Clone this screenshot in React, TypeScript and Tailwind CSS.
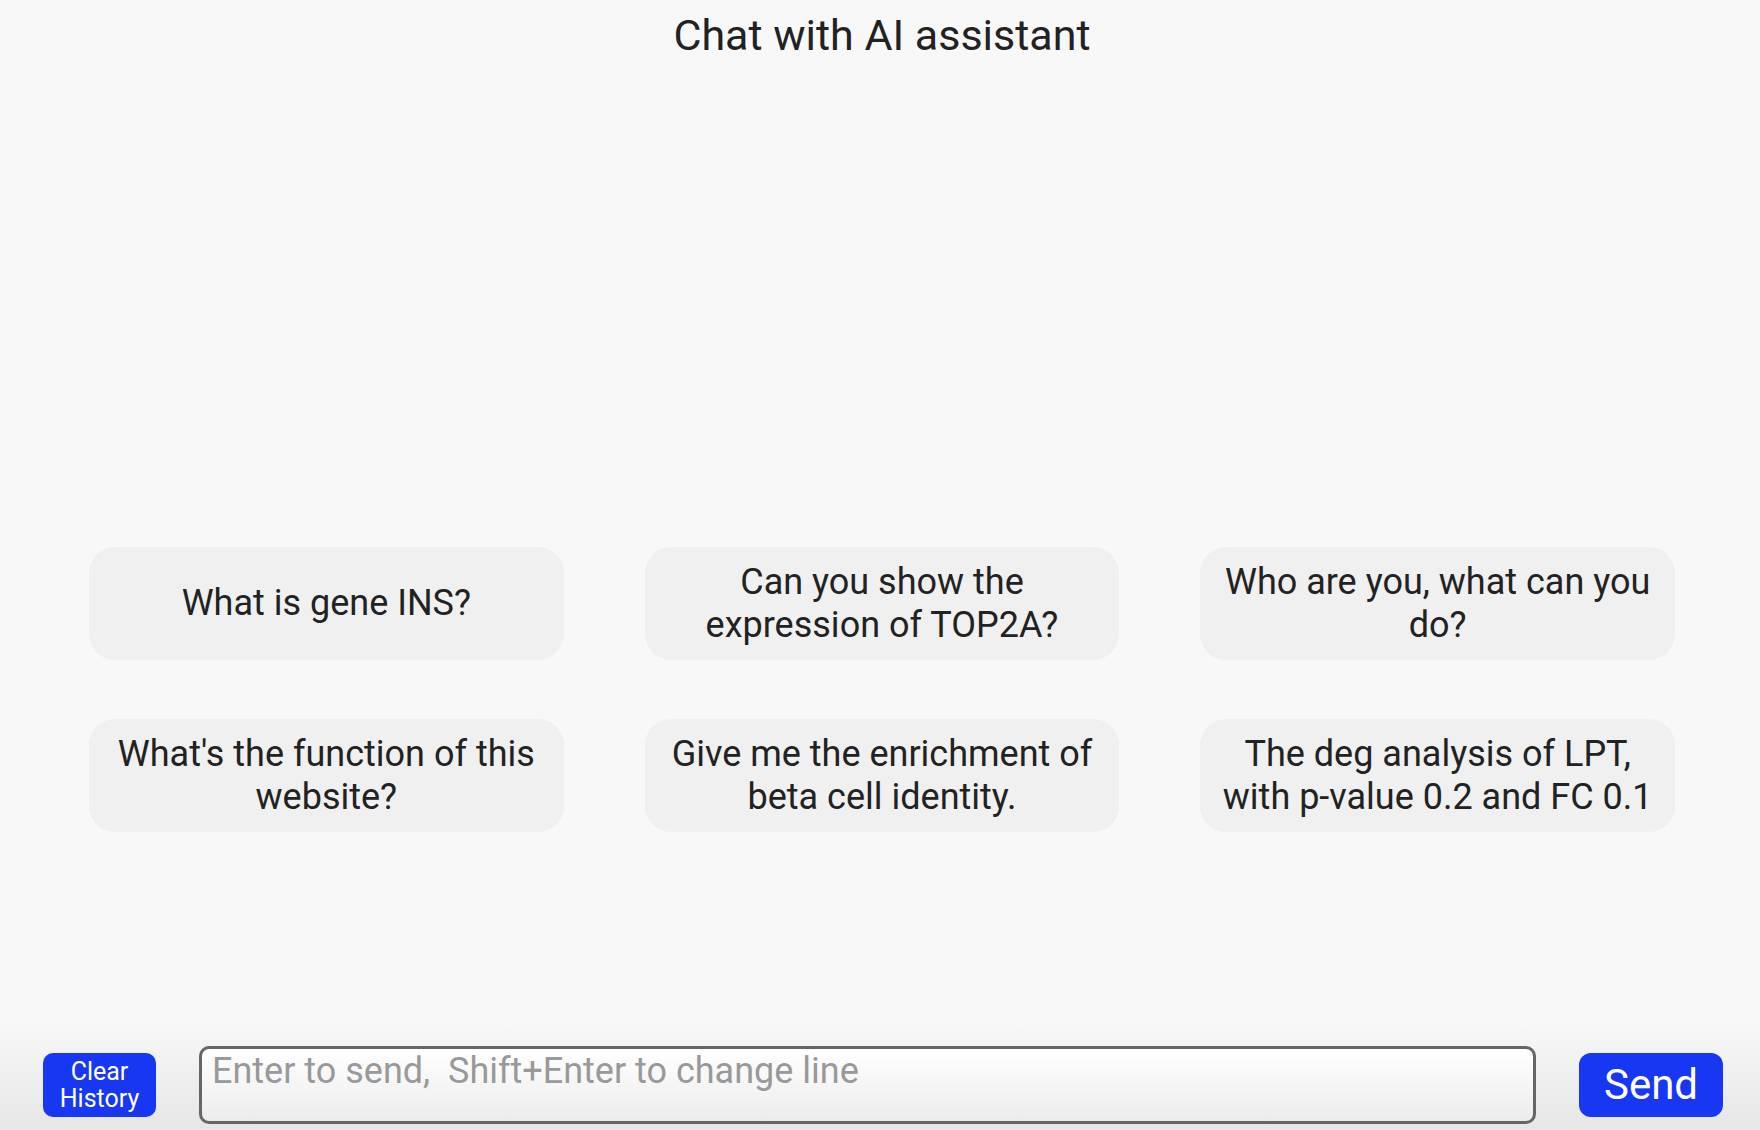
import React from "react";

const suggestions = [
  "What is gene INS?",
  "Can you show the expression of TOP2A?",
  "Who are you, what can you do?",
  "What's the function of this website?",
  "Give me the enrichment of beta cell identity.",
  "The deg analysis of LPT, with p-value 0.2 and FC 0.1",
];

export default function App() {
  return (
    <div
      className="flex h-[1130px] w-full flex-col bg-[#f8f8f8] text-[#222222]"
      style={{ fontFamily: "Roboto, 'Noto Sans', sans-serif" }}
    >
      <h1 className="pt-[10px] pl-[4px] text-center text-[43px] leading-[50px] font-normal">
        Chat with AI assistant
      </h1>

      <div className="mt-[487px] grid grid-cols-3 gap-x-[81px] gap-y-[59px] pl-[89px] pr-[85px]">
        {suggestions.map((text) => (
          <button
            key={text}
            type="button"
            className="flex min-h-[113px] items-center justify-center rounded-[26px] bg-[#f0f0f0] px-[12px] py-[13px] text-center text-[36px] leading-[43px] text-[#222222]"
          >
            {text}
          </button>
        ))}
      </div>

      <div className="flex-1" />

      <div className="flex items-center gap-[43px] bg-gradient-to-b from-[#f8f8f8] to-[#e6e6e6] pt-[24px] pb-[6px] pl-[43px] pr-[37px]">
        <button
          type="button"
          className="flex h-[64px] w-[113px] shrink-0 flex-col items-center justify-center rounded-[10px] bg-[#1737f2] text-[25px] leading-[27px] text-white"
        >
          <span>Clear</span>
          <span>History</span>
        </button>
        <textarea
          placeholder="Enter to send,  Shift+Enter to change line"
          className="h-[78px] flex-1 resize-none rounded-[10px] border-[3px] border-[#666666] bg-gradient-to-b from-white to-[#ececec] px-[10px] py-[1px] text-[36px] leading-[42px] text-[#222222] placeholder:text-[#999999] outline-none"
          style={{ whiteSpace: "pre-wrap" }}
        />
        <button
          type="button"
          className="flex h-[64px] w-[144px] shrink-0 items-center justify-center rounded-[12px] bg-[#1737f2] text-[42px] leading-none text-white"
        >
          Send
        </button>
      </div>
    </div>
  );
}
